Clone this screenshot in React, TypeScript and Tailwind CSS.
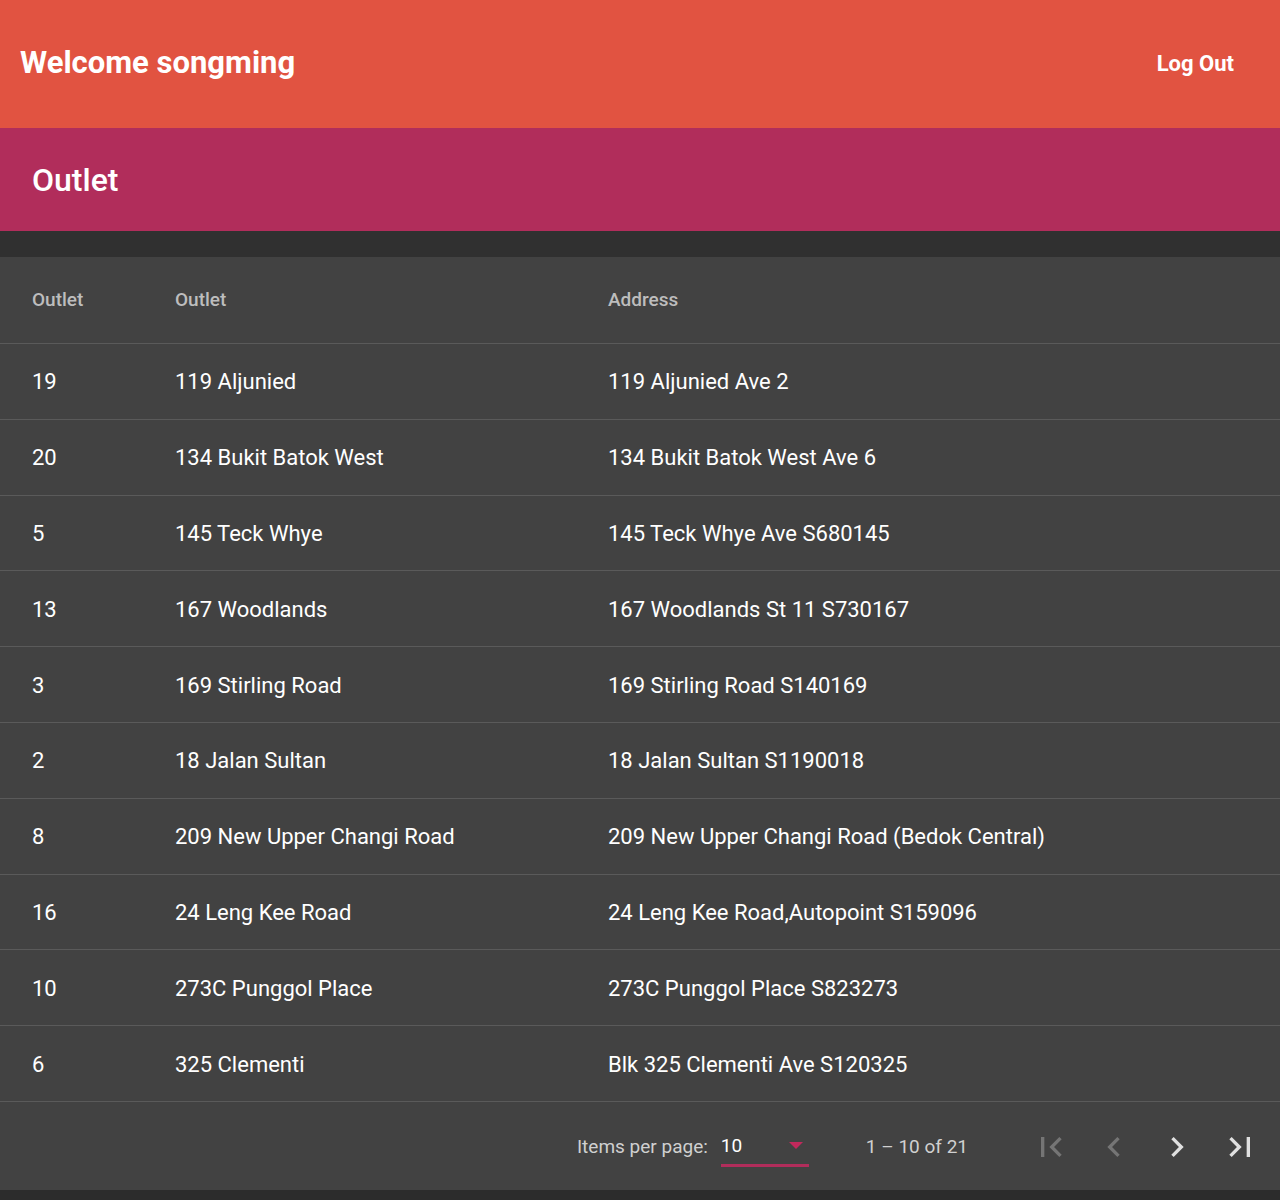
import React from 'react';

const outlets = [
  { id: 19, name: '119 Aljunied', address: '119 Aljunied Ave 2' },
  { id: 20, name: '134 Bukit Batok West', address: '134 Bukit Batok West Ave 6' },
  { id: 5, name: '145 Teck Whye', address: '145 Teck Whye Ave S680145' },
  { id: 13, name: '167 Woodlands', address: '167 Woodlands St 11 S730167' },
  { id: 3, name: '169 Stirling Road', address: '169 Stirling Road S140169' },
  { id: 2, name: '18 Jalan Sultan', address: '18 Jalan Sultan S1190018' },
  { id: 8, name: '209 New Upper Changi Road', address: '209 New Upper Changi Road (Bedok Central)' },
  { id: 16, name: '24 Leng Kee Road', address: '24 Leng Kee Road,Autopoint S159096' },
  { id: 10, name: '273C Punggol Place', address: '273C Punggol Place S823273' },
  { id: 6, name: '325 Clementi', address: 'Blk 325 Clementi Ave S120325' },
];

const Icon = ({ d, className }: { d: string; className: string }) => (
  <svg viewBox="0 0 24 24" className={className} fill="currentColor">
    <path d={d} />
  </svg>
);

export default function App() {
  return (
    <div className="min-h-[1200px] bg-[#2c2c2c] font-['Roboto',sans-serif] text-white">
      <header className="flex h-[128px] items-center justify-between bg-[#e15341] pb-[2px] pl-[20px] pr-[46px]">
        <h1 className="text-[31px] font-bold">Welcome songming</h1>
        <button className="text-[22px] font-bold">Log Out</button>
      </header>

      <div className="flex h-[103px] items-center bg-[#b12d5b] px-[32px]">
        <h2 className="text-[32px] font-medium">Outlet</h2>
      </div>

      <div className="h-[26px] bg-[#303030]" />

      <div className="bg-[#424242]">
        <div className="flex h-[87px] items-center border-b border-[#5a5a5a] text-[19px] font-medium text-[#bdbdbd]">
          <div className="w-[175px] pl-[32px]">Outlet</div>
          <div className="w-[433px]">Outlet</div>
          <div className="flex-1">Address</div>
        </div>
        {outlets.map((o) => (
          <div key={o.id} className="flex h-[75.8px] items-center border-b border-[#5a5a5a] pt-[1px] text-[22px]">
            <div className="w-[175px] pl-[32px]">{o.id}</div>
            <div className="w-[433px]">{o.name}</div>
            <div className="flex-1">{o.address}</div>
          </div>
        ))}
        <div className="flex h-[88px] items-center justify-end pr-[20px] pt-[3px] text-[19px] text-[#d0d0d0]">
          <span>Items per page:</span>
          <div className="relative ml-[13px] flex h-[40px] w-[88px] items-center border-b-[3px] border-[#b12d5b] text-white">
            <span>10</span>
            <span className="absolute right-[6px] top-[15px] h-0 w-0 border-x-[7px] border-t-[7px] border-x-transparent border-t-[#c2295c]" />
          </div>
          <span className="ml-[57px] mr-[63px]">1 – 10 of 21</span>
          <div className="flex items-center gap-[23px]">
            <Icon className="h-[40px] w-[40px] text-[#757575]" d="M18.41 16.59L13.82 12l4.59-4.59L17 6l-6 6 6 6zM6 6h2v12H6z" />
            <Icon className="h-[40px] w-[40px] text-[#757575]" d="M15.41 7.41L14 6l-6 6 6 6 1.41-1.41L10.83 12z" />
            <Icon className="h-[40px] w-[40px] text-[#e0e0e0]" d="M10 6L8.59 7.41 13.17 12l-4.58 4.59L10 18l6-6z" />
            <Icon className="h-[40px] w-[40px] text-[#e0e0e0]" d="M5.59 7.41L10.18 12l-4.59 4.59L7 18l6-6-6-6zM16 6h2v12h-2z" />
          </div>
        </div>
      </div>
    </div>
  );
}
